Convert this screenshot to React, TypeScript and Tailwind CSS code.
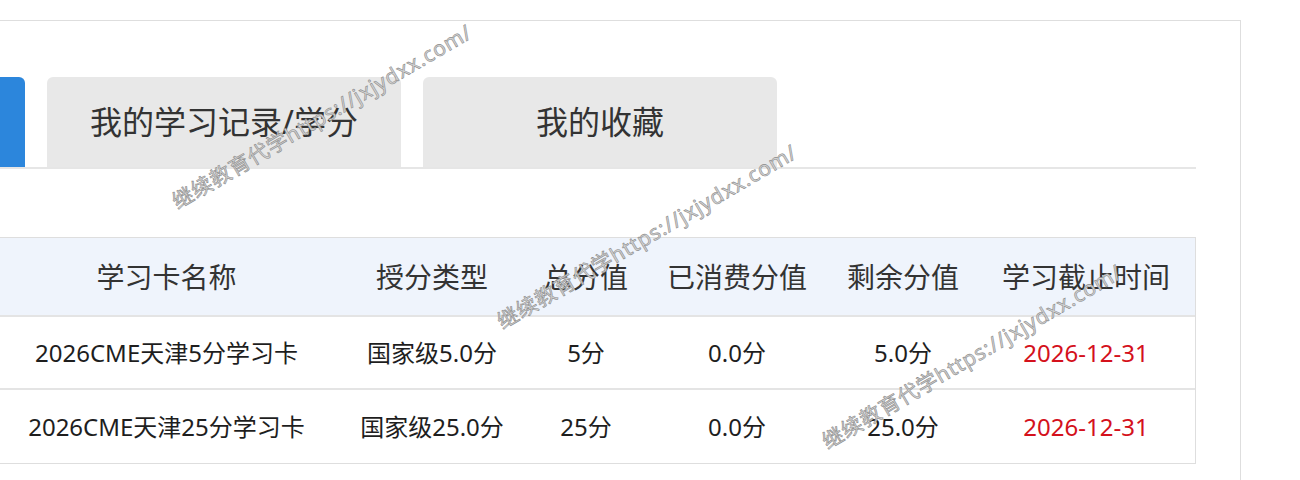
import React from "react";

const cols = "grid grid-cols-[341px_190px_118px_184px_148px_218px]";

const rows = [
  { name: "2026CME天津5分学习卡", type: "国家级5.0分", total: "5分", used: "0.0分", left: "5.0分", end: "2026-12-31" },
  { name: "2026CME天津25分学习卡", type: "国家级25.0分", total: "25分", used: "0.0分", left: "25.0分", end: "2026-12-31" },
];

const heads = ["学习卡名称", "授分类型", "总分值", "已消费分值", "剩余分值", "学习截止时间"];

// watermark centres, taken from the screenshot
const marks = [
  { x: 322, y: 117 },
  { x: 647, y: 237 },
  { x: 972, y: 357 },
];

export default function App() {
  return (
    <div
      className="relative w-[1300px] h-[480px] overflow-hidden bg-white"
      style={{ fontFamily: '"Noto Sans", "Noto Sans CJK SC", sans-serif' }}
    >
      <div className="mt-[20px] -ml-[60px] w-[1301px] h-[520px] border border-[#dedede] bg-white pt-[56px] pl-[54px] pr-[44px]">
        {/* tabs */}
        <div className="-ml-[324px] flex gap-[22px] border-b-2 border-[#e6e6e6]">
          <div className="h-[90px] w-[354px] rounded-t-md bg-[#2c86dc]" />
          <div className="flex h-[90px] w-[354px] items-center justify-center rounded-t-md bg-[#e8e8e8] text-[32px] text-[#333]">
            我的学习记录/学分
          </div>
          <div className="flex h-[90px] w-[354px] items-center justify-center rounded-t-md bg-[#e8e8e8] text-[32px] text-[#333]">
            我的收藏
          </div>
        </div>

        {/* table */}
        <div className="mt-[68px] border border-[#dedede]">
          <div className={`${cols} h-[79px] items-center border-b-2 border-[#e4e4e4] bg-[#eff4fc] text-[28px] text-[#333]`}>
            {heads.map((h) => (
              <div key={h} className="text-center whitespace-nowrap">
                {h}
              </div>
            ))}
          </div>
          {rows.map((r, i) => (
            <div
              key={i}
              className={`${cols} h-[73px] items-center text-[24px] text-[#1e1e1e] ${i === 0 ? "border-b-2 border-[#e4e4e4]" : ""}`}
            >
              <div className="text-center whitespace-nowrap">{r.name}</div>
              <div className="text-center whitespace-nowrap">{r.type}</div>
              <div className="text-center">{r.total}</div>
              <div className="text-center">{r.used}</div>
              <div className="text-center">{r.left}</div>
              <div className="text-center text-[#d4111c]">{r.end}</div>
            </div>
          ))}
        </div>
      </div>

      {marks.map((m, i) => (
        <div
          key={i}
          className="pointer-events-none absolute whitespace-nowrap text-[21px] tracking-[0.8px] text-[#d4d4d4] [-webkit-text-stroke:0.6px_#8c8c8c]"
          style={{ left: m.x, top: m.y, transform: "translate(-50%, -50%) rotate(-30.3deg)" }}
        >
          继续教育代学https://jxjydxx.com/
        </div>
      ))}
    </div>
  );
}
